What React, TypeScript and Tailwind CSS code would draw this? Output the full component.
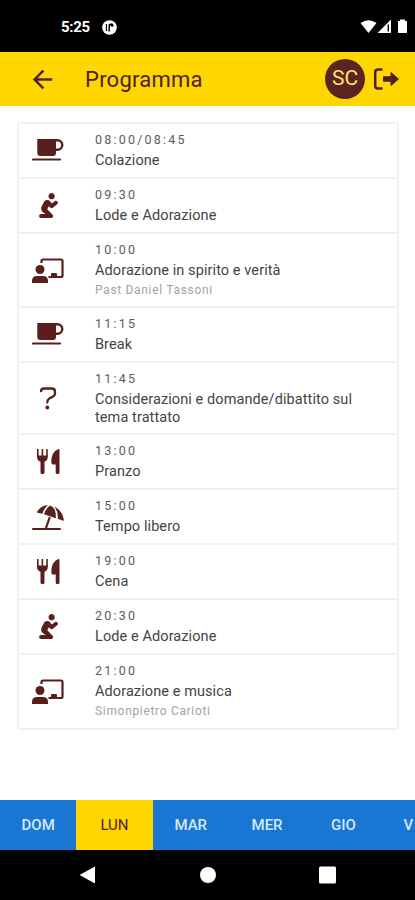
import React from "react"
import { FaPray } from "react-icons/fa"
import { MdArrowBack } from "react-icons/md"

type IconName = "coffee" | "pray" | "teach" | "question" | "food" | "beach"

interface Entry {
    time: string
    title: string
    speaker?: string
    icon: IconName
    height: string
}

const entries: Entry[] = [
    { time: "08:00/08:45", title: "Colazione", icon: "coffee", height: "h-[55px]" },
    { time: "09:30", title: "Lode e Adorazione", icon: "pray", height: "h-[55px]" },
    { time: "10:00", title: "Adorazione in spirito e verità", speaker: "Past Daniel Tassoni", icon: "teach", height: "h-[74px]" },
    { time: "11:15", title: "Break", icon: "coffee", height: "h-[55px]" },
    { time: "11:45", title: "Considerazioni e domande/dibattito sul tema trattato", icon: "question", height: "h-[72px]" },
    { time: "13:00", title: "Pranzo", icon: "food", height: "h-[55px]" },
    { time: "15:00", title: "Tempo libero", icon: "beach", height: "h-[55px]" },
    { time: "19:00", title: "Cena", icon: "food", height: "h-[55px]" },
    { time: "20:30", title: "Lode e Adorazione", icon: "pray", height: "h-[55px]" },
    { time: "21:00", title: "Adorazione e musica", speaker: "Simonpietro Carioti", icon: "teach", height: "h-[73px]" },
]

const days = ["DOM", "LUN", "MAR", "MER", "GIO", "V"]

const CoffeeIcon: React.FC = () => (
    <svg width="32" height="25" viewBox="0 0 32 25" fill="currentColor">
        <path d="M5.3 1H24V15Q24 18 21 18H8.3Q5.3 18 5.3 15Z" />
        <path d="M23 2.2H25.5A4.8 4.8 0 0 1 25.5 11.8H23" fill="none" stroke="currentColor" strokeWidth="2.4" />
        <path d="M1 21.5H28" stroke="currentColor" strokeWidth="2.2" strokeLinecap="round" />
    </svg>
)

const TeachIcon: React.FC = () => (
    <svg width="32" height="25" viewBox="0 0 32 25" fill="currentColor">
        <path d="M9.5 5V3Q9.5 1.5 11 1.5H29Q30.5 1.5 30.5 3V17.5Q30.5 19 29 19H16.5" fill="none" stroke="currentColor" strokeWidth="2.2" />
        <path d="M19 19V16Q19 15 20 15H24Q25 15 25 16V19Z" />
        <circle cx="8" cy="11.5" r="4.5" />
        <path d="M0 25V23Q0 18 5 18H11Q16 18 16 23V25Z" />
    </svg>
)

const QuestionIcon: React.FC = () => (
    <svg width="32" height="24" viewBox="0 0 32 24" fill="none" stroke="currentColor" strokeWidth="2.3">
        <path d="M9 5.2Q9 2.5 12 2.5H19.5Q23 2.5 23 5.5V7.5Q23 9.2 21.3 10.3L17 12.8Q15.3 14 15.3 16.5" strokeLinecap="round" />
        <circle cx="15.3" cy="21.5" r="1.9" fill="currentColor" stroke="none" />
    </svg>
)

const FoodIcon: React.FC = () => (
    <svg width="32" height="25" viewBox="0 0 32 25" fill="currentColor">
        <path d="M5.8 0.5V7M10.4 0.5V7M15 0.5V7" stroke="currentColor" strokeWidth="1.6" strokeLinecap="round" />
        <path d="M5 6.5H15.8V8Q15.8 11.5 12.5 12.7V23.5Q12.5 25 11 25H10Q8.5 25 8.5 23.5V12.7Q5 11.5 5 8Z" />
        <path d="M27.5 1V23.5Q27.5 25 26.2 25H25Q23.7 25 23.7 23.5V15.5H20.8Q19.3 15.5 19.3 13.5Q19 3 26.2 0Q27.5 0 27.5 1Z" />
    </svg>
)

const BeachIcon: React.FC = () => (
    <svg width="32" height="26" viewBox="0 0 32 26" fill="currentColor">
        <path d="M5 8Q8.5 1.8 16 1Q12 4.2 10.5 9.8L5.5 8.8Q4.8 8.6 5 8Z" />
        <path d="M12 10.2Q14.5 3.2 18.2 1.5Q24.3 3.5 23.8 14.2Z" />
        <path d="M21.8 2.2Q30.5 6.5 31.8 15.8Q31.9 17 31 16.7L25.7 14.8Q26.5 7 21.8 2.2Z" />
        <path d="M17.8 13L14 24" stroke="currentColor" strokeWidth="2.2" />
        <path d="M1 25H28" stroke="currentColor" strokeWidth="2" strokeLinecap="round" />
    </svg>
)

const icons: Record<IconName, React.ReactNode> = {
    coffee: <CoffeeIcon />,
    pray: <FaPray className="w-[19px] h-[25px]" />,
    teach: <TeachIcon />,
    question: <QuestionIcon />,
    food: <FoodIcon />,
    beach: <BeachIcon />,
}

const StatusBar: React.FC = () => (
    <div className="h-[52px] shrink-0 bg-black text-white flex items-center pl-[61px] pr-[7px] pt-[2px]">
        <span className="text-[15px] font-bold tracking-[-0.3px]">5:25</span>
        <svg className="ml-3" width="15" height="15" viewBox="0 0 15 15">
            <circle cx="7.5" cy="7.5" r="7.3" fill="white" />
            <path d="M4.5 4V11" stroke="black" strokeWidth="1.2" />
            <path d="M7.2 11.5V5.5Q7.2 4.2 8.5 4.2H10.5" stroke="black" strokeWidth="1.4" fill="none" />
            <circle cx="10" cy="5.2" r="1.5" fill="black" />
        </svg>
        <svg className="ml-auto" width="48" height="16" viewBox="0 0 48 16" fill="white">
            <path d="M0.5 4Q8.5-1.5 16.5 4L8.5 14Z" />
            <path d="M17.5 14L31 0.5V14Z" />
            <path d="M28.3 5.5V12.5" stroke="black" strokeWidth="1.4" />
            <path d="M38 2H40V0.5H45V2H47V14H38Z" />
        </svg>
    </div>
)

const Header: React.FC = () => (
    <header className="h-[54px] shrink-0 bg-[#ffd600] text-[#4e211e] flex items-center pl-[28px] pr-[15px]">
        <MdArrowBack className="w-[29px] h-[29px]" />
        <h1 className="ml-[28px] text-[22px] tracking-[0.25px]">Programma</h1>
        <div className="ml-auto w-10 h-10 rounded-full bg-[#5a2421] text-[#ffe067] text-[21px] flex items-center justify-center">
            SC
        </div>
        <svg className="ml-[7px]" width="28" height="24" viewBox="0 0 28 24">
            <path d="M9.5 2.5H6Q3.2 2.5 3.2 5.3V18.7Q3.2 21.5 6 21.5H9.5" fill="none" stroke="currentColor" strokeWidth="2.5" strokeLinecap="round" />
            <path d="M11.5 9.8H19V5.5L26.5 12L19 18.5V14.2H11.5Z" fill="currentColor" stroke="currentColor" strokeLinejoin="round" />
        </svg>
    </header>
)

const EntryRow: React.FC<{ entry: Entry }> = ({ entry }) => (
    <li className={`${entry.height} flex border-b-2 border-[#f0f0f0] last:border-b-0`}>
        <div className="w-[58px] shrink-0 flex items-center justify-center text-[#5a1f1c]">{icons[entry.icon]}</div>
        <div className="ml-[18px] pt-[7px] w-[280px]">
            <p className="text-[12.5px] leading-[17px] tracking-[2.2px] text-[#5c5c5c]">{entry.time}</p>
            <p className="mt-[4px] text-[14.5px] leading-[18px] tracking-[0.09px] text-[#444]">{entry.title}</p>
            {entry.speaker && <p className="mt-[2px] text-[12px] leading-[16px] tracking-[0.68px] text-[#a3a3a3]">{entry.speaker}</p>}
        </div>
    </li>
)

const DayTabs: React.FC = () => (
    <nav className="h-[50px] shrink-0 flex overflow-hidden bg-[#1976d2] text-[15px] font-medium">
        {days.map(day => (
            <div
                key={day}
                className={`w-[76.3px] shrink-0 flex items-center last:w-[33px] last:pl-[22px] last:justify-start justify-center ${day === "LUN" ? "bg-[#ffd600] text-[#4e211e] font-normal" : "text-[#d7e8fb]"}`}
            >
                {day}
            </div>
        ))}
    </nav>
)

const NavigationBar: React.FC = () => (
    <div className="h-[50px] shrink-0 bg-black flex items-center justify-center">
        <svg width="257" height="18" viewBox="0 0 257 18" fill="white">
            <path d="M16 0.5V17.5L0.5 9Z" />
            <circle cx="129" cy="9" r="8" />
            <rect x="240" y="0.5" width="17" height="17" rx="1.5" />
        </svg>
    </div>
)

const App: React.FC = () => (
    <div className="h-[900px] w-[415px] flex flex-col bg-white overflow-hidden font-['Roboto',sans-serif]">
        <StatusBar />
        <Header />
        <main className="flex-1 pl-[17px] pr-4 pt-4">
            <ul className="border-2 border-[#f0f0f0] rounded-[3px]">
                {entries.map(entry => <EntryRow key={entry.time} entry={entry} />)}
            </ul>
        </main>
        <DayTabs />
        <NavigationBar />
    </div>
)

export default App
